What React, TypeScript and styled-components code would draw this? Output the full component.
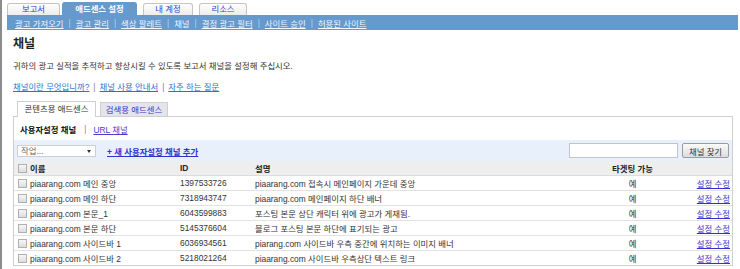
import React from 'react';
import styled, { createGlobalStyle } from 'styled-components';

const GlobalStyle = createGlobalStyle`
  html, body {
    margin: 0;
    padding: 0;
    background: #fff;
  }
  body {
    font-family: "Liberation Sans", "Noto Sans CJK KR", sans-serif;
    font-size: 8.4px;
    color: #333;
  }
`;

type Channel = {
    name: string
    id: string
    desc: string
}

const channels: Channel[] = [
    { name: 'piaarang.com 메인 중앙', id: '1397533726', desc: 'piaarang.com 접속시 메인페이지 가운데 중앙' },
    { name: 'piaarang.com 메인 하단', id: '7318943747', desc: 'piaarang.com 메인페이지 하단 배너' },
    { name: 'piaarang.com 본문_1', id: '6043599883', desc: '포스팅 본문 상단 캐릭터 위에 광고가 게재됨.' },
    { name: 'piaarang.com 본문 하단', id: '5145376604', desc: '블로그 포스팅 본문 하단에 표기되는 광고' },
    { name: 'piaarang.com 사이드바 1', id: '6036934561', desc: 'piarang.com 사이드바 우측 중간에 위치하는 이미지 배너' },
    { name: 'piaarang.com 사이드바 2', id: '5218021264', desc: 'piaarang.com 사이드바 우측상단 텍스트 링크' },
];

const subNav = ['광고 가져오기', '광고 관리', '색상 팔레트', '채널', '결정 광고 필터', '사이트 승인', '허용된 사이트'];
const helpLinks = ['채널이란 무엇입니까?', '채널 사용 안내서', '자주 하는 질문'];

export default function App() {
    return (
        <Page>
            <GlobalStyle />
            <TabRow>
                <Tab $width={53}>보고서</Tab>
                <Tab $width={75} $active>애드센스 설정</Tab>
                <Tab $width={50}>내 계정</Tab>
                <Tab $width={48}>리소스</Tab>
            </TabRow>
            <SubNav>
                {subNav.map((item, i) => (
                    <React.Fragment key={item}>
                        {i > 0 && <NavSep>|</NavSep>}
                        <NavLink $current={item === '채널'}>{item}</NavLink>
                    </React.Fragment>
                ))}
            </SubNav>
            <Content>
                <Title>채널</Title>
                <Desc>귀하의 광고 실적을 추적하고 향상시킬 수 있도록 보고서 채널을 설정해 주십시오.</Desc>
                <HelpRow>
                    {helpLinks.map((item, i) => (
                        <React.Fragment key={item}>
                            {i > 0 && <HelpSep>|</HelpSep>}
                            <HelpLink>{item}</HelpLink>
                        </React.Fragment>
                    ))}
                </HelpRow>
                <SubTabs>
                    <SubTab $width={79} $active>콘텐츠용 애드센스</SubTab>
                    <SubTab $width={68}>검색용 애드센스</SubTab>
                </SubTabs>
                <Panel>
                    <ChannelTabs>
                        <CurrentTab>사용자설정 채널</CurrentTab>
                        <PinkSep>|</PinkSep>
                        <UrlLink>URL 채널</UrlLink>
                    </ChannelTabs>
                    <Toolbar>
                        <Select>작업...</Select>
                        <AddLink>+ 새 사용자설정 채널 추가</AddLink>
                        <Spacer />
                        <SearchInput />
                        <SearchButton>채널 찾기</SearchButton>
                    </Toolbar>
                    <Table>
                        <colgroup>
                            <col style={{ width: 16 }} />
                            <col style={{ width: 150 }} />
                            <col style={{ width: 75 }} />
                            <col style={{ width: 330 }} />
                            <col style={{ width: 95 }} />
                            <col style={{ width: 52 }} />
                        </colgroup>
                        <thead>
                            <tr>
                                <Th><Check /></Th>
                                <Th>이름</Th>
                                <Th>ID</Th>
                                <Th>설명</Th>
                                <Th $align="center">타겟팅 가능</Th>
                                <Th />
                            </tr>
                        </thead>
                        <tbody>
                            {channels.map(c => (
                                <Row key={c.id}>
                                    <Td><Check /></Td>
                                    <Td>{c.name}</Td>
                                    <Td>{c.id}</Td>
                                    <Td>{c.desc}</Td>
                                    <Td $align="center">예</Td>
                                    <Td $align="right"><EditLink>설정 수정</EditLink></Td>
                                </Row>
                            ))}
                        </tbody>
                    </Table>
                </Panel>
            </Content>
        </Page>
    );
}

const Page = styled.div`
    min-height: 269px;
    box-sizing: border-box;
    border-left: 2px solid #8c8c8c;
    padding: 2px 2px 0 5px;
`

const TabRow = styled.div`
    display: flex;
    align-items: flex-end;
    gap: 6px;
    height: 13px;
`

const Tab = styled.div<{ $active?: boolean; $width: number }>`
    box-sizing: border-box;
    width: ${p => p.$width}px;
    height: ${p => (p.$active ? 13 : 12)}px;
    margin-left: ${p => (p.$active ? -4 : 0)}px;
    line-height: ${p => (p.$active ? 13 : 11)}px;
    text-align: center;
    border: 1px solid ${p => (p.$active ? '#6699cc' : '#c4c4c4')};
    border-bottom: none;
    border-radius: 3px 3px 0 0;
    background: ${p => (p.$active ? '#6699cc' : 'linear-gradient(#ffffff, #ececec)')};
    color: ${p => (p.$active ? '#ffffff' : '#2b3fcc')};
    font-weight: ${p => (p.$active ? 'bold' : 'normal')};
`

const SubNav = styled.div`
    display: flex;
    align-items: center;
    height: 15px;
    padding-left: 8px;
    background: #6699cc;
`

const NavLink = styled.span<{ $current?: boolean }>`
    color: #f2f6ff;
    text-decoration: ${p => (p.$current ? 'none' : 'underline')};
    white-space: nowrap;
`

const NavSep = styled.span`
    color: #bcd0ea;
    margin: 0 5px;
`

const Content = styled.div`
    padding: 0 5px 0 6px;
`

const Title = styled.h1`
    margin: 7px 0 0;
    font-size: 12px;
    line-height: 14px;
    font-weight: bold;
    color: #222;
`

const Desc = styled.p`
    margin: 9px 0 0;
    line-height: 12px;
    color: #333;
`

const HelpRow = styled.div`
    margin-top: 9px;
    line-height: 12px;
`

const HelpLink = styled.span`
    color: #2f6fd0;
    text-decoration: underline;
`

const HelpSep = styled.span`
    color: #8a6fb5;
    margin: 0 4px;
`

const SubTabs = styled.div`
    display: flex;
    align-items: flex-end;
    gap: 4px;
    height: 15px;
    margin-top: 8px;
    padding-left: 4px;
`

const SubTab = styled.div<{ $active?: boolean; $width: number }>`
    position: relative;
    z-index: 1;
    box-sizing: border-box;
    width: ${p => p.$width}px;
    height: ${p => (p.$active ? 16 : 14)}px;
    margin-bottom: ${p => (p.$active ? -1 : 0)}px;
    line-height: 14px;
    text-align: center;
    white-space: nowrap;
    border: 1px solid #cfcfcf;
    border-bottom: none;
    background: ${p => (p.$active ? '#ffffff' : '#e4e4ea')};
    color: ${p => (p.$active ? '#333' : '#3434cc')};
`

const Panel = styled.div`
    border: 1px solid #cfcfcf;
`

const ChannelTabs = styled.div`
    display: flex;
    align-items: center;
    height: 23px;
    padding-left: 6px;
`

const CurrentTab = styled.span`
    font-weight: bold;
    color: #111;
`

const PinkSep = styled.span`
    color: #cc5fa8;
    margin: 0 7px 0 8px;
`

const UrlLink = styled.span`
    color: #4a3dcc;
    text-decoration: underline;
`

const Toolbar = styled.div`
    display: flex;
    align-items: center;
    height: 21px;
    padding: 0 3px 0 3px;
    background: #e8f0fb;
`

const Select = styled.div`
    position: relative;
    box-sizing: border-box;
    width: 79px;
    height: 12px;
    line-height: 11px;
    padding-left: 3px;
    border: 1px solid #cfcfcf;
    background: #fff;
    color: #666;

    &::after {
        content: '';
        position: absolute;
        right: 4px;
        top: 4px;
        border-left: 2.5px solid transparent;
        border-right: 2.5px solid transparent;
        border-top: 3px solid #333;
    }
`

const AddLink = styled.span`
    margin-left: 11px;
    font-weight: bold;
    color: #3333cc;
    text-decoration: underline;
`

const Spacer = styled.div`
    flex: 1;
`

const SearchInput = styled.input`
    box-sizing: border-box;
    width: 109px;
    height: 15px;
    border: 1px solid #c4c4c4;
    padding: 0;
    background: #fff;
`

const SearchButton = styled.button`
    box-sizing: border-box;
    width: 47px;
    height: 15px;
    margin-left: 4px;
    padding: 0;
    border: 1px solid #9c9c9c;
    border-radius: 2px;
    background: linear-gradient(#fbfbfb, #dcdcdc);
    font-family: inherit;
    font-size: 8.4px;
    color: #333;
`

const Table = styled.table`
    width: 100%;
    border-collapse: collapse;
    table-layout: fixed;
`

const Th = styled.th<{ $align?: string }>`
    height: 14px;
    padding: 0;
    text-align: ${p => p.$align || 'left'};
    font-weight: bold;
    color: #222;
    background: #eeeeee;
    border-bottom: 1px solid #dcdcdc;
`

const Row = styled.tr`
    &:last-child td {
        border-bottom: none;
    }
`

const Td = styled.td<{ $align?: string }>`
    height: 14px;
    padding: 0 ${p => (p.$align === 'right' ? 2 : 0)}px 0 0;
    text-align: ${p => p.$align || 'left'};
    color: #333;
    white-space: nowrap;
    border-bottom: 1px solid #e2e2e2;
`

const Check = styled.span`
    display: block;
    box-sizing: border-box;
    width: 9px;
    height: 9px;
    margin-left: 4px;
    border: 1px solid #b0b0b0;
    background: linear-gradient(#f6f6f6, #dddddd);
`

const EditLink = styled.span`
    color: #3333cc;
    text-decoration: underline;
`
